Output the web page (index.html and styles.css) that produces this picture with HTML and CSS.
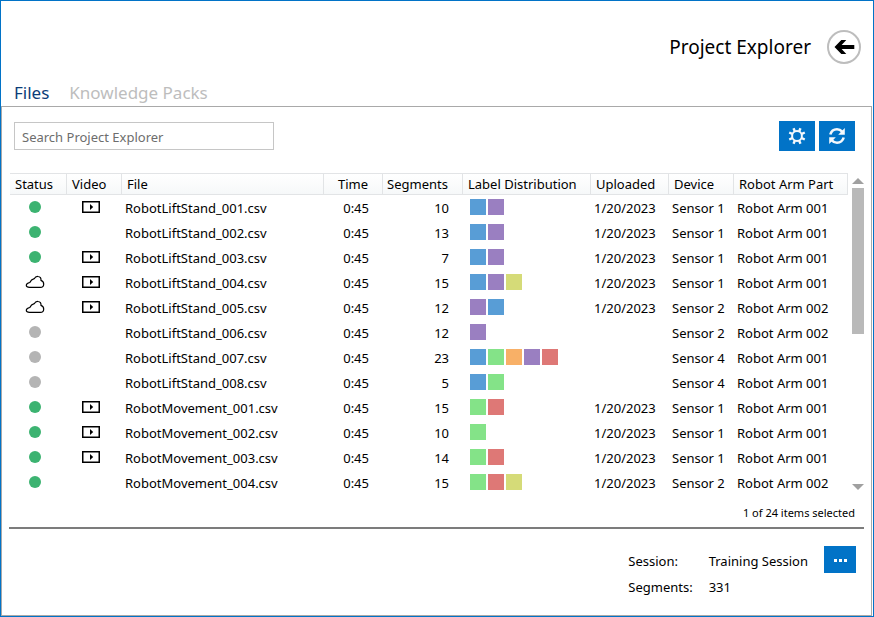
FILE: index.html
```html
<!DOCTYPE html>
<html lang="en">
<head>
<meta charset="utf-8">
<title>Project Explorer</title>
<link rel="stylesheet" href="styles.css">
</head>
<body>
<svg class="defs" aria-hidden="true">
  <symbol id="dot" viewBox="0 0 20 14"><circle cx="10" cy="7" r="6" fill="currentColor"/></symbol>
  <symbol id="cloud" viewBox="0 0 20 14"><path d="M4.500 12.400C2.400 12.400 1.300 11.500 1.300 10.200 1.300 8.900 2.600 8 4.800 7.500 5.800 5.200 7 4.200 9.200 3.700 10.200 2 11.400 1.300 13 1.500 15 1.700 16.200 3.300 16 5.400 17.800 6.100 18.800 7.300 18.700 9.200 18.600 11.300 17.400 12.400 15.400 12.400Z" fill="#fff" stroke="#000" stroke-width="1.200"/></symbol>
  <symbol id="video" viewBox="0 0 18 12"><rect x=".75" y=".75" width="16.500" height="10.500" fill="#fff" stroke="#000" stroke-width="1.500"/><path d="M8 3V9L11.200 6Z" fill="#000"/></symbol>
</svg>
<div class="window">
  <header class="titlebar">
    <h1>Project Explorer</h1>
    <button class="back" type="button" aria-label="Back">
      <svg viewBox="0 0 34 34"><circle cx="17" cy="17" r="16" fill="#fff" stroke="#bdbdbd" stroke-width="2"/><path d="M7.500 17 14.300 10H19.300L14.600 15H27.300V19H14.600L19.300 24H14.300Z" fill="#000"/></svg>
    </button>
  </header>
  <nav class="tabs">
    <a class="tab active" href="#files">Files</a>
    <a class="tab" href="#packs">Knowledge Packs</a>
  </nav>
  <main class="panel" id="files">
    <div class="toolbar">
      <input class="search" type="text" placeholder="Search Project Explorer" aria-label="Search Project Explorer">
      <div class="actions">
        <button class="action" type="button" aria-label="Settings">
          <svg viewBox="0 0 18 18"><circle cx="9" cy="9" r="4.900" fill="none" stroke="#f4f8fc" stroke-width="2"/><g stroke="#f4f8fc" stroke-width="2.400"><path d="M13.800 6.800 16.800 5.500M13.800 11.200 16.800 12.500M4.200 6.800 1.200 5.500M4.200 11.200 1.200 12.500"/><path d="M11.200 4.200 12.500 1.200M11.200 13.800 12.500 16.800M6.800 4.200 5.500 1.200M6.800 13.800 5.500 16.800"/></g></svg>
        </button>
        <button class="action" type="button" aria-label="Refresh">
          <svg viewBox="0 0 18 18"><g fill="none" stroke="#f4f8fc" stroke-width="2.600"><path d="M2.300 7.500C3.300 4 6 2.300 9 2.300 11.200 2.300 12.800 3.200 14.200 4.700"/><path d="M15.700 10.500C14.700 14 12 15.700 9 15.700 6.800 15.700 5.200 14.800 3.800 13.300"/></g><path d="M16.800 1V7.700H10.200ZM1.200 17V10.300H7.800Z" fill="#f4f8fc"/></svg>
        </button>
      </div>
    </div>
    <div class="list">
      <table>
        <colgroup><col class="c-status"><col class="c-video"><col class="c-file"><col class="c-time"><col class="c-segments"><col class="c-labels"><col class="c-uploaded"><col class="c-device"><col class="c-part"></colgroup>
        <thead>
          <tr><th>Status</th><th>Video</th><th>File</th><th class="num">Time</th><th class="num">Segments</th><th>Label Distribution</th><th>Uploaded</th><th>Device</th><th>Robot Arm Part</th></tr>
        </thead>
        <tbody>
          <tr><td class="icon"><svg class="status synced"><use href="#dot"/></svg></td><td class="icon"><svg class="video"><use href="#video"/></svg></td><td>RobotLiftStand_001.csv</td><td class="num">0:45</td><td class="num">10</td><td><div class="labels"><i class="blue"></i><i class="purple"></i></div></td><td>1/20/2023</td><td>Sensor 1</td><td>Robot Arm 001</td></tr>
          <tr><td class="icon"><svg class="status synced"><use href="#dot"/></svg></td><td></td><td>RobotLiftStand_002.csv</td><td class="num">0:45</td><td class="num">13</td><td><div class="labels"><i class="blue"></i><i class="purple"></i></div></td><td>1/20/2023</td><td>Sensor 1</td><td>Robot Arm 001</td></tr>
          <tr><td class="icon"><svg class="status synced"><use href="#dot"/></svg></td><td class="icon"><svg class="video"><use href="#video"/></svg></td><td>RobotLiftStand_003.csv</td><td class="num">0:45</td><td class="num">7</td><td><div class="labels"><i class="blue"></i><i class="purple"></i></div></td><td>1/20/2023</td><td>Sensor 1</td><td>Robot Arm 001</td></tr>
          <tr><td class="icon"><svg class="status"><use href="#cloud"/></svg></td><td class="icon"><svg class="video"><use href="#video"/></svg></td><td>RobotLiftStand_004.csv</td><td class="num">0:45</td><td class="num">15</td><td><div class="labels"><i class="blue"></i><i class="purple"></i><i class="yellow"></i></div></td><td>1/20/2023</td><td>Sensor 1</td><td>Robot Arm 001</td></tr>
          <tr><td class="icon"><svg class="status"><use href="#cloud"/></svg></td><td class="icon"><svg class="video"><use href="#video"/></svg></td><td>RobotLiftStand_005.csv</td><td class="num">0:45</td><td class="num">12</td><td><div class="labels"><i class="purple"></i><i class="blue"></i></div></td><td>1/20/2023</td><td>Sensor 2</td><td>Robot Arm 002</td></tr>
          <tr><td class="icon"><svg class="status local"><use href="#dot"/></svg></td><td></td><td>RobotLiftStand_006.csv</td><td class="num">0:45</td><td class="num">12</td><td><div class="labels"><i class="purple"></i></div></td><td></td><td>Sensor 2</td><td>Robot Arm 002</td></tr>
          <tr><td class="icon"><svg class="status local"><use href="#dot"/></svg></td><td></td><td>RobotLiftStand_007.csv</td><td class="num">0:45</td><td class="num">23</td><td><div class="labels"><i class="blue"></i><i class="green"></i><i class="orange"></i><i class="purple"></i><i class="red"></i></div></td><td></td><td>Sensor 4</td><td>Robot Arm 001</td></tr>
          <tr><td class="icon"><svg class="status local"><use href="#dot"/></svg></td><td></td><td>RobotLiftStand_008.csv</td><td class="num">0:45</td><td class="num">5</td><td><div class="labels"><i class="blue"></i><i class="green"></i></div></td><td></td><td>Sensor 4</td><td>Robot Arm 001</td></tr>
          <tr><td class="icon"><svg class="status synced"><use href="#dot"/></svg></td><td class="icon"><svg class="video"><use href="#video"/></svg></td><td>RobotMovement_001.csv</td><td class="num">0:45</td><td class="num">15</td><td><div class="labels"><i class="green"></i><i class="red"></i></div></td><td>1/20/2023</td><td>Sensor 1</td><td>Robot Arm 001</td></tr>
          <tr><td class="icon"><svg class="status synced"><use href="#dot"/></svg></td><td class="icon"><svg class="video"><use href="#video"/></svg></td><td>RobotMovement_002.csv</td><td class="num">0:45</td><td class="num">10</td><td><div class="labels"><i class="green"></i></div></td><td>1/20/2023</td><td>Sensor 1</td><td>Robot Arm 001</td></tr>
          <tr><td class="icon"><svg class="status synced"><use href="#dot"/></svg></td><td class="icon"><svg class="video"><use href="#video"/></svg></td><td>RobotMovement_003.csv</td><td class="num">0:45</td><td class="num">14</td><td><div class="labels"><i class="green"></i><i class="red"></i></div></td><td>1/20/2023</td><td>Sensor 1</td><td>Robot Arm 001</td></tr>
          <tr><td class="icon"><svg class="status synced"><use href="#dot"/></svg></td><td></td><td>RobotMovement_004.csv</td><td class="num">0:45</td><td class="num">15</td><td><div class="labels"><i class="green"></i><i class="red"></i><i class="yellow"></i></div></td><td>1/20/2023</td><td>Sensor 2</td><td>Robot Arm 002</td></tr>
        </tbody>
      </table>
      <div class="scrollbar" aria-hidden="true">
        <svg class="arrow" viewBox="0 0 12 6"><path d="M0 6 6 0 12 6Z"/></svg>
        <div class="track"><div class="thumb"></div></div>
        <svg class="arrow" viewBox="0 0 12 6"><path d="M0 0 6 6 12 0Z"/></svg>
      </div>
    </div>
    <p class="count">1 of 24 items selected</p>
    <footer class="summary">
      <dl>
        <dt>Session:</dt><dd>Training Session</dd>
        <dt>Segments:</dt><dd>331</dd>
      </dl>
      <button class="more" type="button" aria-label="Choose session">
        <svg viewBox="0 0 14 4"><path d="M1 1h3v3H1zM6 1h3v3H6zM11 1h3v3H11z" fill="#fff"/></svg>
      </button>
    </footer>
  </main>
</div>
</body>
</html>
```

FILE: styles.css
```css
* {
  box-sizing: border-box;
}

body {
  margin: 0;
  background: #fff;
  color: #000;
  font: 13px/18px "Noto Sans", "Open Sans", sans-serif;
}

button {
  display: flex;
  align-items: center;
  justify-content: center;
  padding: 0;
  border: 0;
  background: #0173c7;
}

.defs {
  position: absolute;
  width: 0;
  height: 0;
}

.window {
  display: flex;
  flex-direction: column;
  min-height: 100vh;
  padding-right: 1px;
  border: 1px solid #0173c7;
}

.titlebar {
  display: flex;
  align-items: center;
  justify-content: flex-end;
  gap: 16px;
  padding: 29px 11px 0 0;
}

h1 {
  margin: 0;
  font-size: 19px;
  font-weight: 400;
  line-height: 26px;
}

.back {
  width: 34px;
  height: 34px;
  background: none;
}

.back svg {
  width: 34px;
  height: 34px;
}

.tabs {
  display: flex;
  gap: 20px;
  padding: 17px 13px 1px;
}

.tab {
  color: #bdbdbd;
  font-size: 17px;
  line-height: 24px;
  text-decoration: none;
}

.tab.active {
  color: #0b3c78;
}

.panel {
  display: flex;
  flex: 1;
  flex-direction: column;
  border: 1px solid #a9a9a9;
  padding: 14px 7px 0;
}

.toolbar {
  display: flex;
  align-items: center;
  justify-content: space-between;
  padding: 0 9px 0 5px;
}

.search {
  width: 260px;
  height: 28px;
  padding: 2px 7px 0;
  border: 1px solid #c6c6c6;
  font: inherit;
}

.search::placeholder {
  color: #6d6d6d;
  opacity: 1;
}

.actions {
  display: flex;
  gap: 4px;
}

.action {
  width: 36px;
  height: 30px;
}

.action svg {
  width: 18px;
  height: 18px;
}

.list {
  display: flex;
  gap: 4px;
  margin-top: 22px;
  padding-left: 1px;
}

table {
  flex: 1;
  table-layout: fixed;
  width: 0;
  border-spacing: 0;
}

.c-status { width: 57px; }
.c-video { width: 55px; }
.c-time { width: 59px; }
.c-segments { width: 80px; }
.c-labels { width: 128px; }
.c-uploaded { width: 78px; }
.c-device { width: 65px; }
.c-part { width: 114px; }

th,
td {
  padding: 0 0 0 3px;
  text-align: left;
  white-space: nowrap;
}

th {
  height: 22px;
  padding-left: 5px;
  border: solid #e2e4e6;
  border-width: 1px 1px 1px 0;
  background: linear-gradient(#fff, #f6f8f9);
  font-weight: 400;
}

td {
  height: 25px;
}

th.num,
td.num {
  padding: 0 14px 0 0;
  text-align: right;
}

td.icon {
  padding: 0 8px 2px 0;
  text-align: center;
}

td svg {
  display: block;
  margin: 0 auto;
}

.status {
  width: 20px;
  height: 14px;
}

.synced { color: #3cb371; }
.local { color: #b4b4b4; }

.video {
  width: 18px;
  height: 12px;
}

.labels {
  display: flex;
  gap: 2px;
  padding: 0 0 1px 4px;
}

.labels i {
  width: 16px;
  height: 16px;
}

.blue { background: #589dd6; }
.purple { background: #9a7fc1; }
.yellow { background: #d5db78; }
.green { background: #84e388; }
.orange { background: #f8b067; }
.red { background: #de7876; }

.scrollbar {
  display: flex;
  flex-direction: column;
  gap: 4px;
  width: 12px;
  padding: 5px 0;
}

.arrow {
  width: 12px;
  height: 6px;
  fill: #a0a0a0;
}

.track {
  flex: 1;
}

.thumb {
  height: 50%;
  background: #b9b9b9;
}

.count {
  margin: 9px 9px 5px;
  font-size: 11px;
  text-align: right;
}

.summary {
  display: flex;
  justify-content: flex-end;
  align-items: flex-start;
  gap: 16px;
  padding: 17px 8px 0;
  border-top: 2px solid #7c7c7c;
}

dl {
  display: grid;
  grid-template-columns: auto auto;
  gap: 8px 16px;
  margin: 6px 0 0;
}

dd {
  margin: 0;
}

.more {
  width: 32px;
  height: 27px;
}

.more svg {
  width: 14px;
  height: 4px;
}
```
